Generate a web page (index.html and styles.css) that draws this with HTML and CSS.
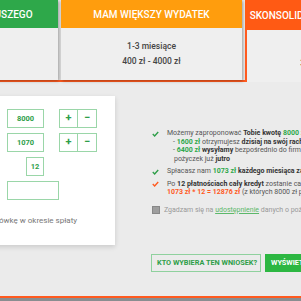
FILE: index.html
```html
<!DOCTYPE html>
<html lang="pl">
<head>
<meta charset="utf-8">
<link rel="stylesheet" href="styles.css">
</head>
<body>
<div class="tabs">
  <div class="tab">
    <div class="tab-head green">CHCĘ CZEGOŚ MNIEJSZEGO</div>
    <div class="tab-body"><div>1 miesiąc</div><div>100 zł - 400 zł</div></div>
  </div>
  <div class="tab">
    <div class="tab-head orange">MAM WIĘKSZY WYDATEK</div>
    <div class="tab-body"><div>1-3 miesiące</div><div>400 zł - 4000 zł</div></div>
  </div>
  <div class="tab active">
    <div class="tab-head red">SKONSOLIDUJ WSZYSTKIE POŻYCZKI</div>
    <div class="tab-body"><div>6-24 miesięcy</div><div>3000 zł - 25 000 zł</div></div>
  </div>
</div>

<div class="main">
  <div class="panel">
    <div class="row">
      <div class="field">8000</div>
      <div class="steps"><span class="step">+</span><span class="step">−</span></div>
    </div>
    <div class="row">
      <div class="field">1070</div>
      <div class="steps"><span class="step">+</span><span class="step">−</span></div>
    </div>
    <div class="row">
      <div class="field small">12</div>
    </div>
    <div class="row">
      <div class="field wide"></div>
    </div>
    <div class="note">ówkę w okresie spłaty</div>
  </div>

  <div class="info">
    <div class="item">
      <svg class="ico" viewBox="0 0 9 7"><path d="M1 3.6 L3.4 6 L8 1" fill="none" stroke="#2e9e48" stroke-width="1.8"/></svg>
      <div class="lines">
        <div>Możemy zaproponować <b>Tobie kwotę</b> <span class="g">8000 zł</span></div>
        <div class="ind">- <span class="g">1600 zł</span> otrzymujesz <b>dzisiaj na swój rachunek</b></div>
        <div class="ind">- <span class="g">6400 zł</span> <b>wysyłamy</b> bezpośrednio do firm udzielających</div>
        <div class="ind2">pożyczek już <b>jutro</b></div>
      </div>
    </div>
    <div class="item">
      <svg class="ico" viewBox="0 0 9 7"><path d="M1 3.6 L3.4 6 L8 1" fill="none" stroke="#2e9e48" stroke-width="1.8"/></svg>
      <div class="lines">
        <div>Spłacasz nam <span class="g">1073 zł</span> <b>każdego miesiąca za pożyczkę</b></div>
      </div>
    </div>
    <div class="item item3">
      <svg class="ico" viewBox="0 0 9 7"><path d="M1 3.6 L3.4 6 L8 1" fill="none" stroke="#ff5a1f" stroke-width="1.8"/></svg>
      <div class="lines">
        <div>Po <b>12 płatnościach cały kredyt</b> zostanie całkowicie spłacony</div>
        <div><span class="o">1073 zł * 12 = 12876 zł</span> (z których 8000 zł pożyczyłeś)</div>
      </div>
    </div>
    <div class="agree">
      <span class="box"></span>
      <span>Zgadzam się na <span class="link">udostępnienie</span> danych o pożyczkach</span>
    </div>
    <div class="buttons">
      <span class="btn outline">KTO WYBIERA TEN WNIOSEK?</span>
      <span class="btn solid">WYŚWIETL WNIOSEK</span>
    </div>
  </div>
</div>

<div class="footer"></div>
</body>
</html>
```

FILE: styles.css
```css
html, body {
  margin: 0;
  padding: 0;
}
body {
  width: 301px;
  height: 301px;
  overflow: hidden;
  background: #ebebeb;
  font-family: Roboto, "Liberation Sans", sans-serif;
  color: #555;
}
.tabs {
  display: flex;
  gap: 3px;
  margin-left: -123px;
  height: 80px;
  border-bottom: 2px solid #ff5a1f;
}
.tab {
  flex: none;
  width: 181px;
  height: 80px;
  box-sizing: border-box;
  background: #efefef;
  box-shadow: 1px 1px 3px rgba(0, 0, 0, 0.35);
}
.tab.active {
  border: 2px solid #ff5a1f;
  border-bottom: none;
  height: 82px;
  box-shadow: none;
}
.tab-head {
  height: 28px;
  line-height: 30px;
  text-align: center;
  color: #fff;
  font-size: 10px;
  font-weight: 500;
  white-space: nowrap;
}
.tab.active .tab-head {
  margin: -2px -2px 0;
  height: 30px;
  line-height: 31px;
}
.green { background: #2ea84a; }
.orange { background: #ff9d0d; }
.red { background: #ff5a14; }
.tab-body {
  padding-top: 11px;
  text-align: center;
  font-size: 8.5px;
  font-weight: 500;
  line-height: 15px;
  color: #444;
  white-space: nowrap;
}

.main {
  display: flex;
  align-items: flex-start;
  height: 200px;
  margin-top: 14px;
}
.panel {
  flex: none;
  margin-left: -20px;
  width: 135px;
  height: 149px;
  box-sizing: border-box;
  padding: 13px 0 0 27px;
  background: #fff;
  box-shadow: 0 2px 5px rgba(0, 0, 0, 0.14);
  display: flex;
  flex-direction: column;
  gap: 5px;
}
.row {
  display: flex;
  height: 19px;
}
.field {
  box-sizing: border-box;
  width: 37px;
  height: 19px;
  border: 1px solid #9ad6a8;
  color: #2e9e48;
  font-size: 7.5px;
  font-weight: 700;
  line-height: 17px;
  text-align: center;
}
.field.small {
  width: 18px;
  margin-left: 19px;
}
.field.wide {
  width: 52px;
}
.steps {
  display: flex;
  margin-left: 15px;
}
.step {
  box-sizing: border-box;
  width: 19px;
  height: 19px;
  border: 1px solid #9ad6a8;
  color: #2e9e48;
  font-size: 11px;
  font-weight: 700;
  line-height: 16px;
  text-align: center;
}
.step + .step {
  border-left: none;
}
.note {
  margin: 11px 0 0 -8px;
  font-size: 8px;
  color: #777;
  white-space: nowrap;
}

.info {
  flex: none;
  margin: 33px 0 0 37px;
  font-size: 7px;
  line-height: 8.5px;
  white-space: nowrap;
  color: #555;
}
.item {
  display: flex;
  margin-bottom: 4px;
}
.item3 {
  margin-top: 0.5px;
}
.ico {
  flex: none;
  width: 7px;
  height: 6px;
  margin: 1.5px 8px 0 0;
}
.lines b {
  color: #333;
  font-weight: 700;
}
.ind { padding-left: 6px; }
.ind2 { padding-left: 7px; }
.g { color: #2ea84a; font-weight: 700; }
.o { color: #ff5a1f; font-weight: 700; }
.agree {
  display: flex;
  align-items: center;
  margin-top: 9px;
  color: #999;
}
.box {
  width: 6px;
  height: 6px;
  background: #9e9e9e;
  border: 0.5px solid #888;
  margin-right: 4px;
}
.link {
  color: #5cb86a;
  text-decoration: underline;
}
.buttons {
  display: flex;
  gap: 4px;
  margin-top: 40px;
  margin-left: -1px;
}
.btn {
  box-sizing: border-box;
  height: 18px;
  line-height: 16px;
  font-size: 7.3px;
  font-weight: 700;
  padding: 0 5px;
  border: 1px solid #8fd19e;
}
.btn.outline {
  width: 110px;
  text-align: center;
  color: #2e9e48;
  background: transparent;
}
.btn.solid {
  background: #2db742;
  border-color: #2db742;
  color: #fff;
}
.footer {
  height: 10px;
  border-top: 2px solid #ff5a1f;
  background: #8a8d90;
}
```
